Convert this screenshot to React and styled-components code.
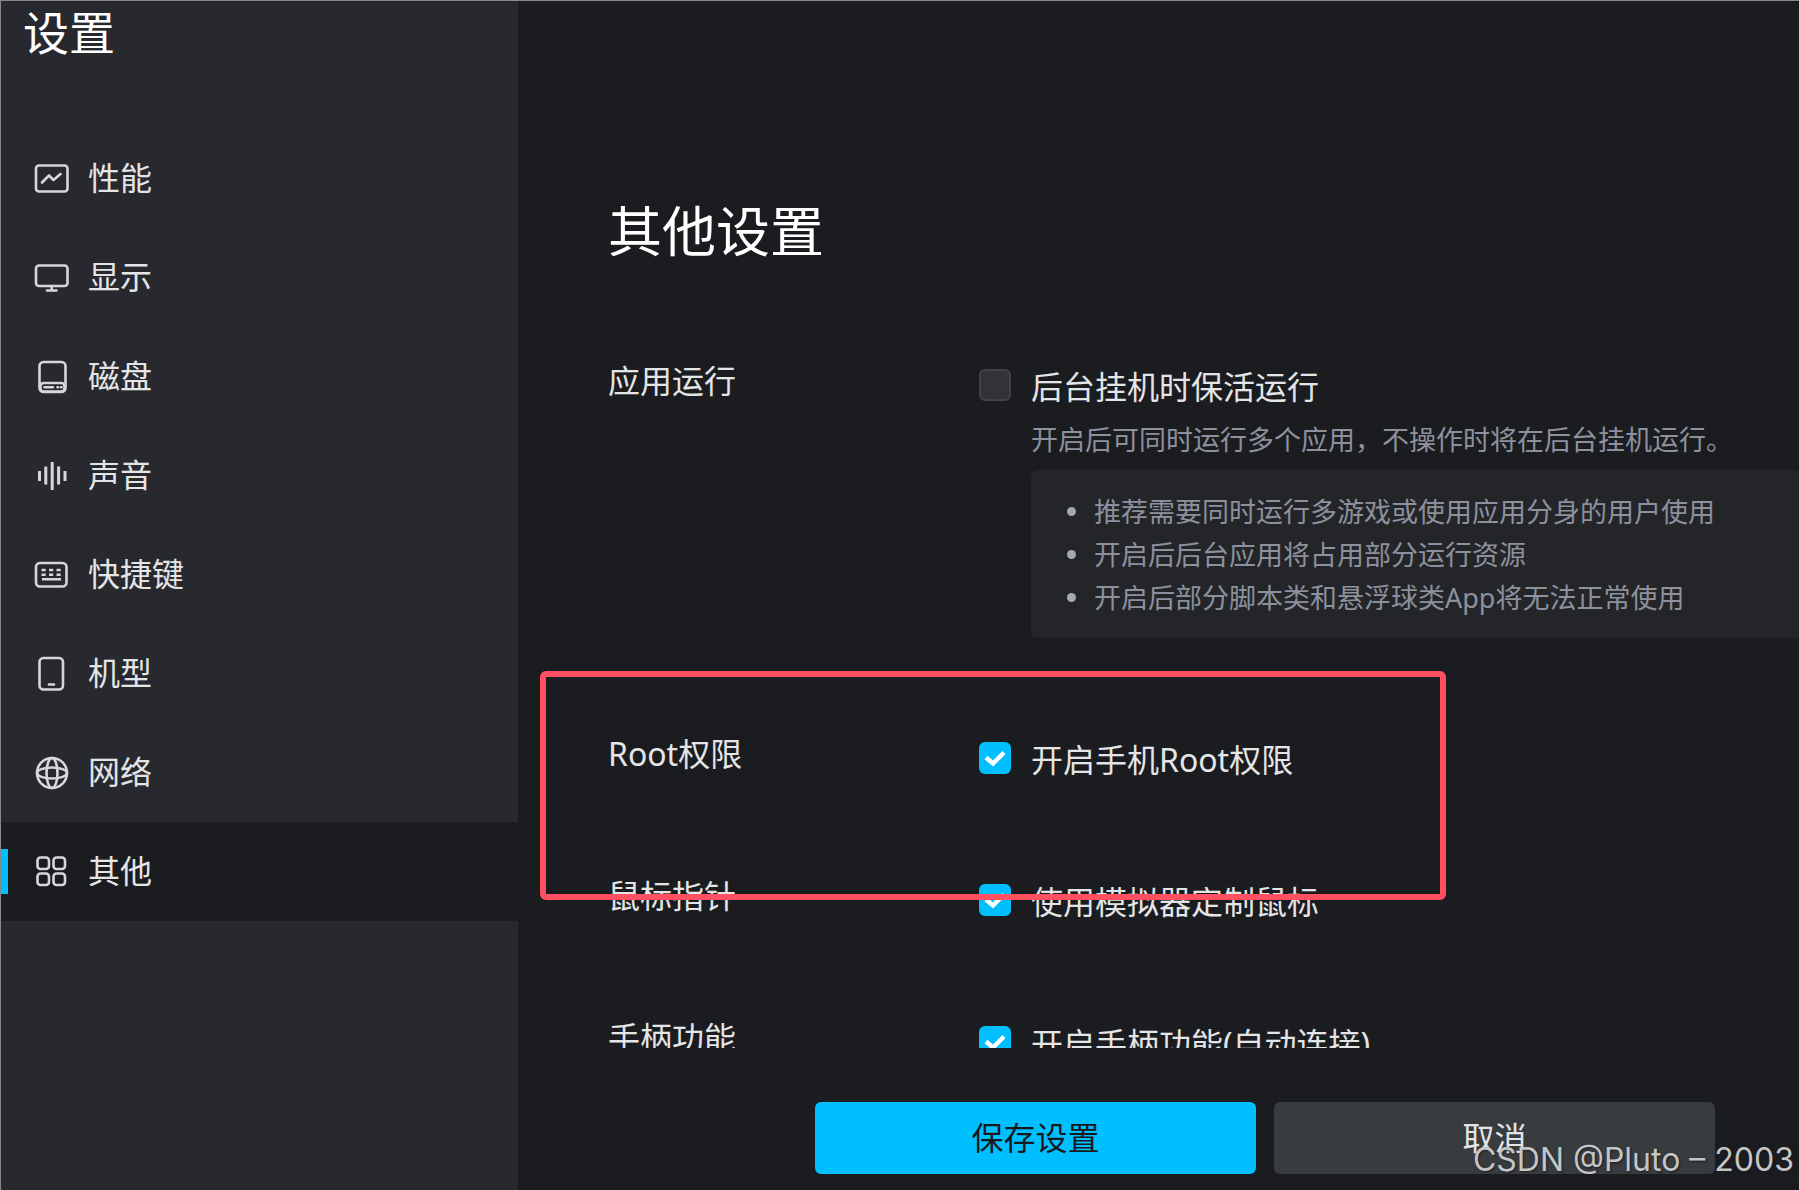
import React from 'react';
import styled, { createGlobalStyle } from 'styled-components';

const navItems = [
  { key: 'performance', label: '性能' },
  { key: 'display', label: '显示' },
  { key: 'disk', label: '磁盘' },
  { key: 'sound', label: '声音' },
  { key: 'shortcut', label: '快捷键' },
  { key: 'model', label: '机型' },
  { key: 'network', label: '网络' },
  { key: 'other', label: '其他' },
];

const tips = [
  '推荐需要同时运行多游戏或使用应用分身的用户使用',
  '开启后后台应用将占用部分运行资源',
  '开启后部分脚本类和悬浮球类App将无法正常使用',
];

const iconShapes = {
  performance: (
    <>
      <rect x="3" y="5.5" width="31.500" height="26" rx="3" />
      <path d="M9 22.500l7-7 4.500 4.500 7-6" />
    </>
  ),
  display: (
    <>
      <rect x="3" y="6.5" width="31.500" height="20.500" rx="3" />
      <path d="M18.700 27v4M14 31.500h9.500" />
    </>
  ),
  disk: (
    <>
      <rect x="6.500" y="4" width="26" height="30" rx="4" />
      <rect x="7.500" y="25" width="24" height="8.500" rx="3" />
      <path d="M11.500 29.200h8.500M24.500 29.200h.5M28 29.200h.5" />
    </>
  ),
  sound: <path strokeLinecap="butt" strokeWidth="3" d="M6.500 14v10M12.800 9.500v18M19.200 5v28M25.600 9.500v18M32 14v10" />,
  shortcut: (
    <>
      <rect x="3" y="7" width="30.500" height="23.500" rx="4" />
      <path strokeLinecap="butt" d="M8.500 14h4.200M16 14h4.200M23.500 14h4.200M8.500 18.700h4.200M16 18.700h4.200M23.500 18.700h4.200M9 23.200h19" />
    </>
  ),
  model: (
    <>
      <rect x="6.500" y="3" width="23.500" height="31.500" rx="4" />
      <path d="M16 29.500h5" />
    </>
  ),
  network: (
    <>
      <circle cx="19" cy="19" r="15" />
      <ellipse cx="19" cy="19" rx="5.500" ry="15" />
      <ellipse cx="19" cy="19" rx="15" ry="5.500" />
    </>
  ),
  other: (
    <>
      <rect x="4.500" y="4.500" width="11.500" height="11.500" rx="3" />
      <rect x="20.500" y="4.500" width="11.500" height="11.500" rx="3" />
      <rect x="4.500" y="20.500" width="11.500" height="11.500" rx="3" />
      <rect x="20.500" y="20.500" width="11.500" height="11.500" rx="3" />
    </>
  ),
};

const CheckOption = ({ id, checked, children }) => (
  <Option>
    <CheckBox id={id} type="checkbox" defaultChecked={checked} />
    <OptionLabel htmlFor={id}>{children}</OptionLabel>
  </Option>
);

const App = () => {
  return (
    <>
      <GlobalStyle />
      <Window>
        <Sidebar>
          <SidebarTitle>设置</SidebarTitle>
          <NavList>
            {navItems.map(({ key, label }) => (
              <li key={key}>
                <NavLink href={`#${key}`} $active={key === 'other'}>
                  <NavIcon viewBox="0 0 38 38" aria-hidden="true">
                    {iconShapes[key]}
                  </NavIcon>
                  <NavText>{label}</NavText>
                </NavLink>
              </li>
            ))}
          </NavList>
        </Sidebar>
        <Main>
          <Content>
            <PageTitle>其他设置</PageTitle>
            <Row>
              <RowLabel>应用运行</RowLabel>
              <div>
                <CheckOption id="keep-alive">后台挂机时保活运行</CheckOption>
                <Description>开启后可同时运行多个应用&#xff0c;不操作时将在后台挂机运行。</Description>
                <Tips>
                  {tips.map((tip) => (
                    <Tip key={tip}>{tip}</Tip>
                  ))}
                </Tips>
              </div>
            </Row>
            <Row>
              <RowLabel>Root权限</RowLabel>
              <CheckOption id="root" checked>
                开启手机Root权限
              </CheckOption>
              <Highlight />
            </Row>
            <Row>
              <RowLabel>鼠标指针</RowLabel>
              <CheckOption id="mouse" checked>
                使用模拟器定制鼠标
              </CheckOption>
            </Row>
            <Row>
              <RowLabel>手柄功能</RowLabel>
              <CheckOption id="gamepad" checked>
                开启手柄功能(自动连接)
              </CheckOption>
            </Row>
          </Content>
          <Footer>
            <Button $primary type="button">
              保存设置
            </Button>
            <Button type="button">取消</Button>
          </Footer>
        </Main>
        <Watermark>CSDN @Pluto – 2003</Watermark>
      </Window>
    </>
  );
};

export default App;

const GlobalStyle = createGlobalStyle`
  * {
    box-sizing: border-box;
  }

  body {
    margin: 0;
    background: #1b1c20;
    color: #e4e5e6;
    font-family: 'Noto Sans', 'Noto Sans CJK SC', sans-serif;
    font-size: 32px;
    line-height: 44px;
  }
`;

const Window = styled.div`
  position: relative;
  display: flex;
  height: 100vh;
  overflow: hidden;
  border-top: 1px solid #85898a;
  border-left: 1px solid #85898a;
`;

const Sidebar = styled.aside`
  flex: 0 0 517px;
  background: #28292e;
`;

const SidebarTitle = styled.h2`
  margin: 0;
  padding: 0 22px;
  height: 128px;
  color: #fff;
  font-size: 46px;
  font-weight: 400;
  line-height: 62px;
`;

const NavList = styled.ul`
  margin: 0;
  padding: 0;
  list-style: none;
`;

const NavLink = styled.a`
  display: flex;
  align-items: center;
  height: 99px;
  color: inherit;
  text-decoration: none;
  background: ${(props) => (props.$active ? '#1b1c20' : 'transparent')};

  &::before {
    content: '';
    width: 7px;
    height: 45px;
    margin-right: 25px;
    background: ${(props) => (props.$active ? '#00bfff' : 'transparent')};
  }
`;

const NavIcon = styled.svg`
  flex: none;
  width: 38px;
  height: 38px;
  margin-right: 17px;
  fill: none;
  stroke: #d6d7d7;
  stroke-width: 2.6;
  stroke-linecap: round;
  stroke-linejoin: round;
`;

const NavText = styled.span`
  padding-bottom: 2px;
`;

const Main = styled.main`
  display: flex;
  flex: 1;
  flex-direction: column;
  min-width: 0;
`;

const Content = styled.section`
  flex: 1;
  min-height: 0;
  padding: 190px 0 0 90px;
  overflow: hidden;
`;

const PageTitle = styled.h1`
  margin: 0 0 88px;
  color: #fff;
  font-size: 54px;
  font-weight: 400;
  line-height: 80px;
`;

const Row = styled.div`
  position: relative;
  display: grid;
  grid-template-columns: 371px 1fr;
  align-items: start;
  margin-bottom: 90px;
`;

const RowLabel = styled.div`
  line-height: 44px;
`;

const Option = styled.div`
  display: flex;
  align-items: center;
  gap: 20px;
  height: 52px;
`;

const CheckBox = styled.input`
  appearance: none;
  flex: none;
  width: 32px;
  height: 32px;
  margin: 0;
  border: 2px solid #414246;
  border-radius: 6px;
  background: #323337;

  &:checked {
    border: 0;
    background: #00bfff
      url("data:image/svg+xml,%3Csvg xmlns='http://www.w3.org/2000/svg' viewBox='0 0 32 32'%3E%3Cpath d='M7 15.500l7 6 11-11' fill='none' stroke='white' stroke-width='4.500'/%3E%3C/svg%3E");
  }
`;

const OptionLabel = styled.label`
  padding-top: 3px;
  white-space: nowrap;
`;

const Description = styled.p`
  margin: 9px 0 10px 52px;
  color: #8c919d;
  font-size: 27px;
  line-height: 40px;
  white-space: nowrap;
`;

const Tips = styled.ul`
  margin: 0 0 4px 52px;
  padding: 20px 0 19px 63px;
  border-radius: 6px 0 0 6px;
  color: #8c919d;
  background: #242529;
  font-size: 27px;
  line-height: 43px;
  list-style: none;
`;

const Tip = styled.li`
  display: flex;
  align-items: center;
  white-space: nowrap;

  &::before {
    content: '';
    width: 9px;
    height: 9px;
    margin-left: -27px;
    margin-right: 18px;
    border-radius: 50%;
    background: #a3a8b4;
  }
`;

const Highlight = styled.div`
  position: absolute;
  top: -61px;
  left: -68px;
  width: 906px;
  height: 229px;
  z-index: 1;
  border: 6px solid #ff5062;
  border-radius: 6px;
  pointer-events: none;
`;

const Footer = styled.footer`
  display: flex;
  justify-content: flex-end;
  gap: 18px;
  padding: 54px 84px 16px 0;
`;

const Button = styled.button`
  width: 441px;
  height: 72px;
  border: 0;
  border-radius: 6px;
  color: ${(props) => (props.$primary ? '#16191d' : '#e4e5e6')};
  background: ${(props) => (props.$primary ? '#00bfff' : '#383c3f')};
  font: inherit;
`;

const Watermark = styled.div`
  position: absolute;
  right: 5px;
  bottom: 8px;
  color: #c4c5c6;
  font-family: Inter, sans-serif;
  font-size: 32px;
  text-shadow: 1px 1px 2px #1b1c20;
  pointer-events: none;
`;
